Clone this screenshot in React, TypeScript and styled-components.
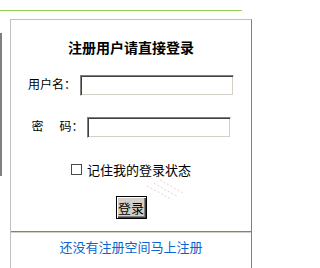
import styled, { createGlobalStyle } from 'styled-components'

const GlobalStyle = createGlobalStyle`
  html, body {
    margin: 0;
    padding: 0;
    background: #fff;
    font-family: "Liberation Sans", "Noto Sans CJK SC", sans-serif;
    font-size: 12px;
    color: #000;
  }
`

const Page = styled.div`
  width: 261px;
  height: 268px;
  overflow: hidden;
  position: relative;
`

const GreenRule = styled.div`
  margin-top: 10px;
  width: 242px;
  height: 1px;
  background: #8fd253;
`

const Row = styled.div`
  display: flex;
  align-items: flex-start;
`

const SideEdge = styled.div`
  width: 2px;
  height: 143px;
  margin-top: 22px;
  background: #808080;
`

const Panel = styled.div`
  margin-left: 8px;
  margin-top: 8px;
  width: 242px;
  height: 260px;
  box-sizing: border-box;
  border-top: 1px solid #c0c0c0;
  border-left: 1px solid #c0c0c0;
  border-right: 1px solid #808080;
  display: flex;
  flex-direction: column;
  align-items: center;
`

const Title = styled.div`
  margin-top: 18px;
  line-height: 20px;
  font-size: 14px;
  font-weight: bold;
`

const Field = styled.div<{ $top: number }>`
  display: flex;
  align-items: center;
  margin-top: ${p => p.$top}px;
`

const Label = styled.span<{ $gap: number }>`
  font-size: 12px;
  line-height: 21px;
  margin-right: ${p => p.$gap}px;
  white-space: nowrap;
`

const Spacer = styled.span`
  display: inline-block;
  width: 16px;
`

const TextBox = styled.input<{ $w: number }>`
  width: ${p => p.$w}px;
  height: 21px;
  box-sizing: border-box;
  margin: 0;
  padding: 0 2px;
  outline: none;
  background: #fff;
  border: 1px solid;
  border-color: #808080 #fff #fff #808080;
  box-shadow: inset 1px 1px #404040, inset -1px -1px #d4d0c8;
`

const Remember = styled.label`
  display: flex;
  align-items: center;
  margin-top: 22px;
  height: 18px;
  font-size: 13px;
`

const Check = styled.input`
  appearance: none;
  width: 11px;
  height: 11px;
  margin: 0 5px 0 0;
  border: 1px solid #4a4a4a;
  background: #fff;
  box-sizing: border-box;
`

const SubmitButton = styled.button`
  margin-top: 18px;
  width: 31px;
  height: 23px;
  padding: 0 0 1px;
  box-sizing: border-box;
  font-family: "Noto Sans CJK SC", sans-serif;
  font-size: 13px;
  line-height: 19px;
  color: #000;
  background: #d4d0c8;
  border: 1px solid #000;
  box-shadow: inset 1px 1px #fff, inset -1px -1px #404040, inset -2px -2px #808080;
`

const Divider = styled.div`
  margin-top: 12px;
  align-self: stretch;
  height: 1px;
  background: #808080;
  border-bottom: 1px solid #d4d0c8;
`

const RegisterLink = styled.a`
  margin-top: 5px;
  line-height: 20px;
  font-size: 13px;
  color: #0a66cc;
  text-decoration: none;
`

const Streaks = styled.svg`
  position: absolute;
  left: 145px;
  top: 179px;
`

function App() {
  return (
    <Page>
      <GlobalStyle />
      <GreenRule />
      <Row>
        <SideEdge />
        <Panel>
          <Title>注册用户请直接登录</Title>
          <Field $top={17}>
            <Label $gap={4}>用户名：</Label>
            <TextBox $w={154} />
          </Field>
          <Field $top={21}>
            <Label $gap={3}>密<Spacer />码：</Label>
            <TextBox $w={144} type="password" />
          </Field>
          <Remember>
            <Check type="checkbox" />
            记住我的登录状态
          </Remember>
          <SubmitButton>登录</SubmitButton>
          <Divider />
          <RegisterLink href="#">还没有注册空间马上注册</RegisterLink>
        </Panel>
      </Row>
      <Streaks width="42" height="24" viewBox="0 0 42 24">
        <g stroke="#f0ccd6" strokeWidth="1" strokeDasharray="2 2" fill="none">
          <line x1="2" y1="7" x2="26" y2="20" />
          <line x1="9" y1="4" x2="33" y2="18" />
          <line x1="15" y1="1" x2="38" y2="14" />
        </g>
      </Streaks>
    </Page>
  )
}

export default App
